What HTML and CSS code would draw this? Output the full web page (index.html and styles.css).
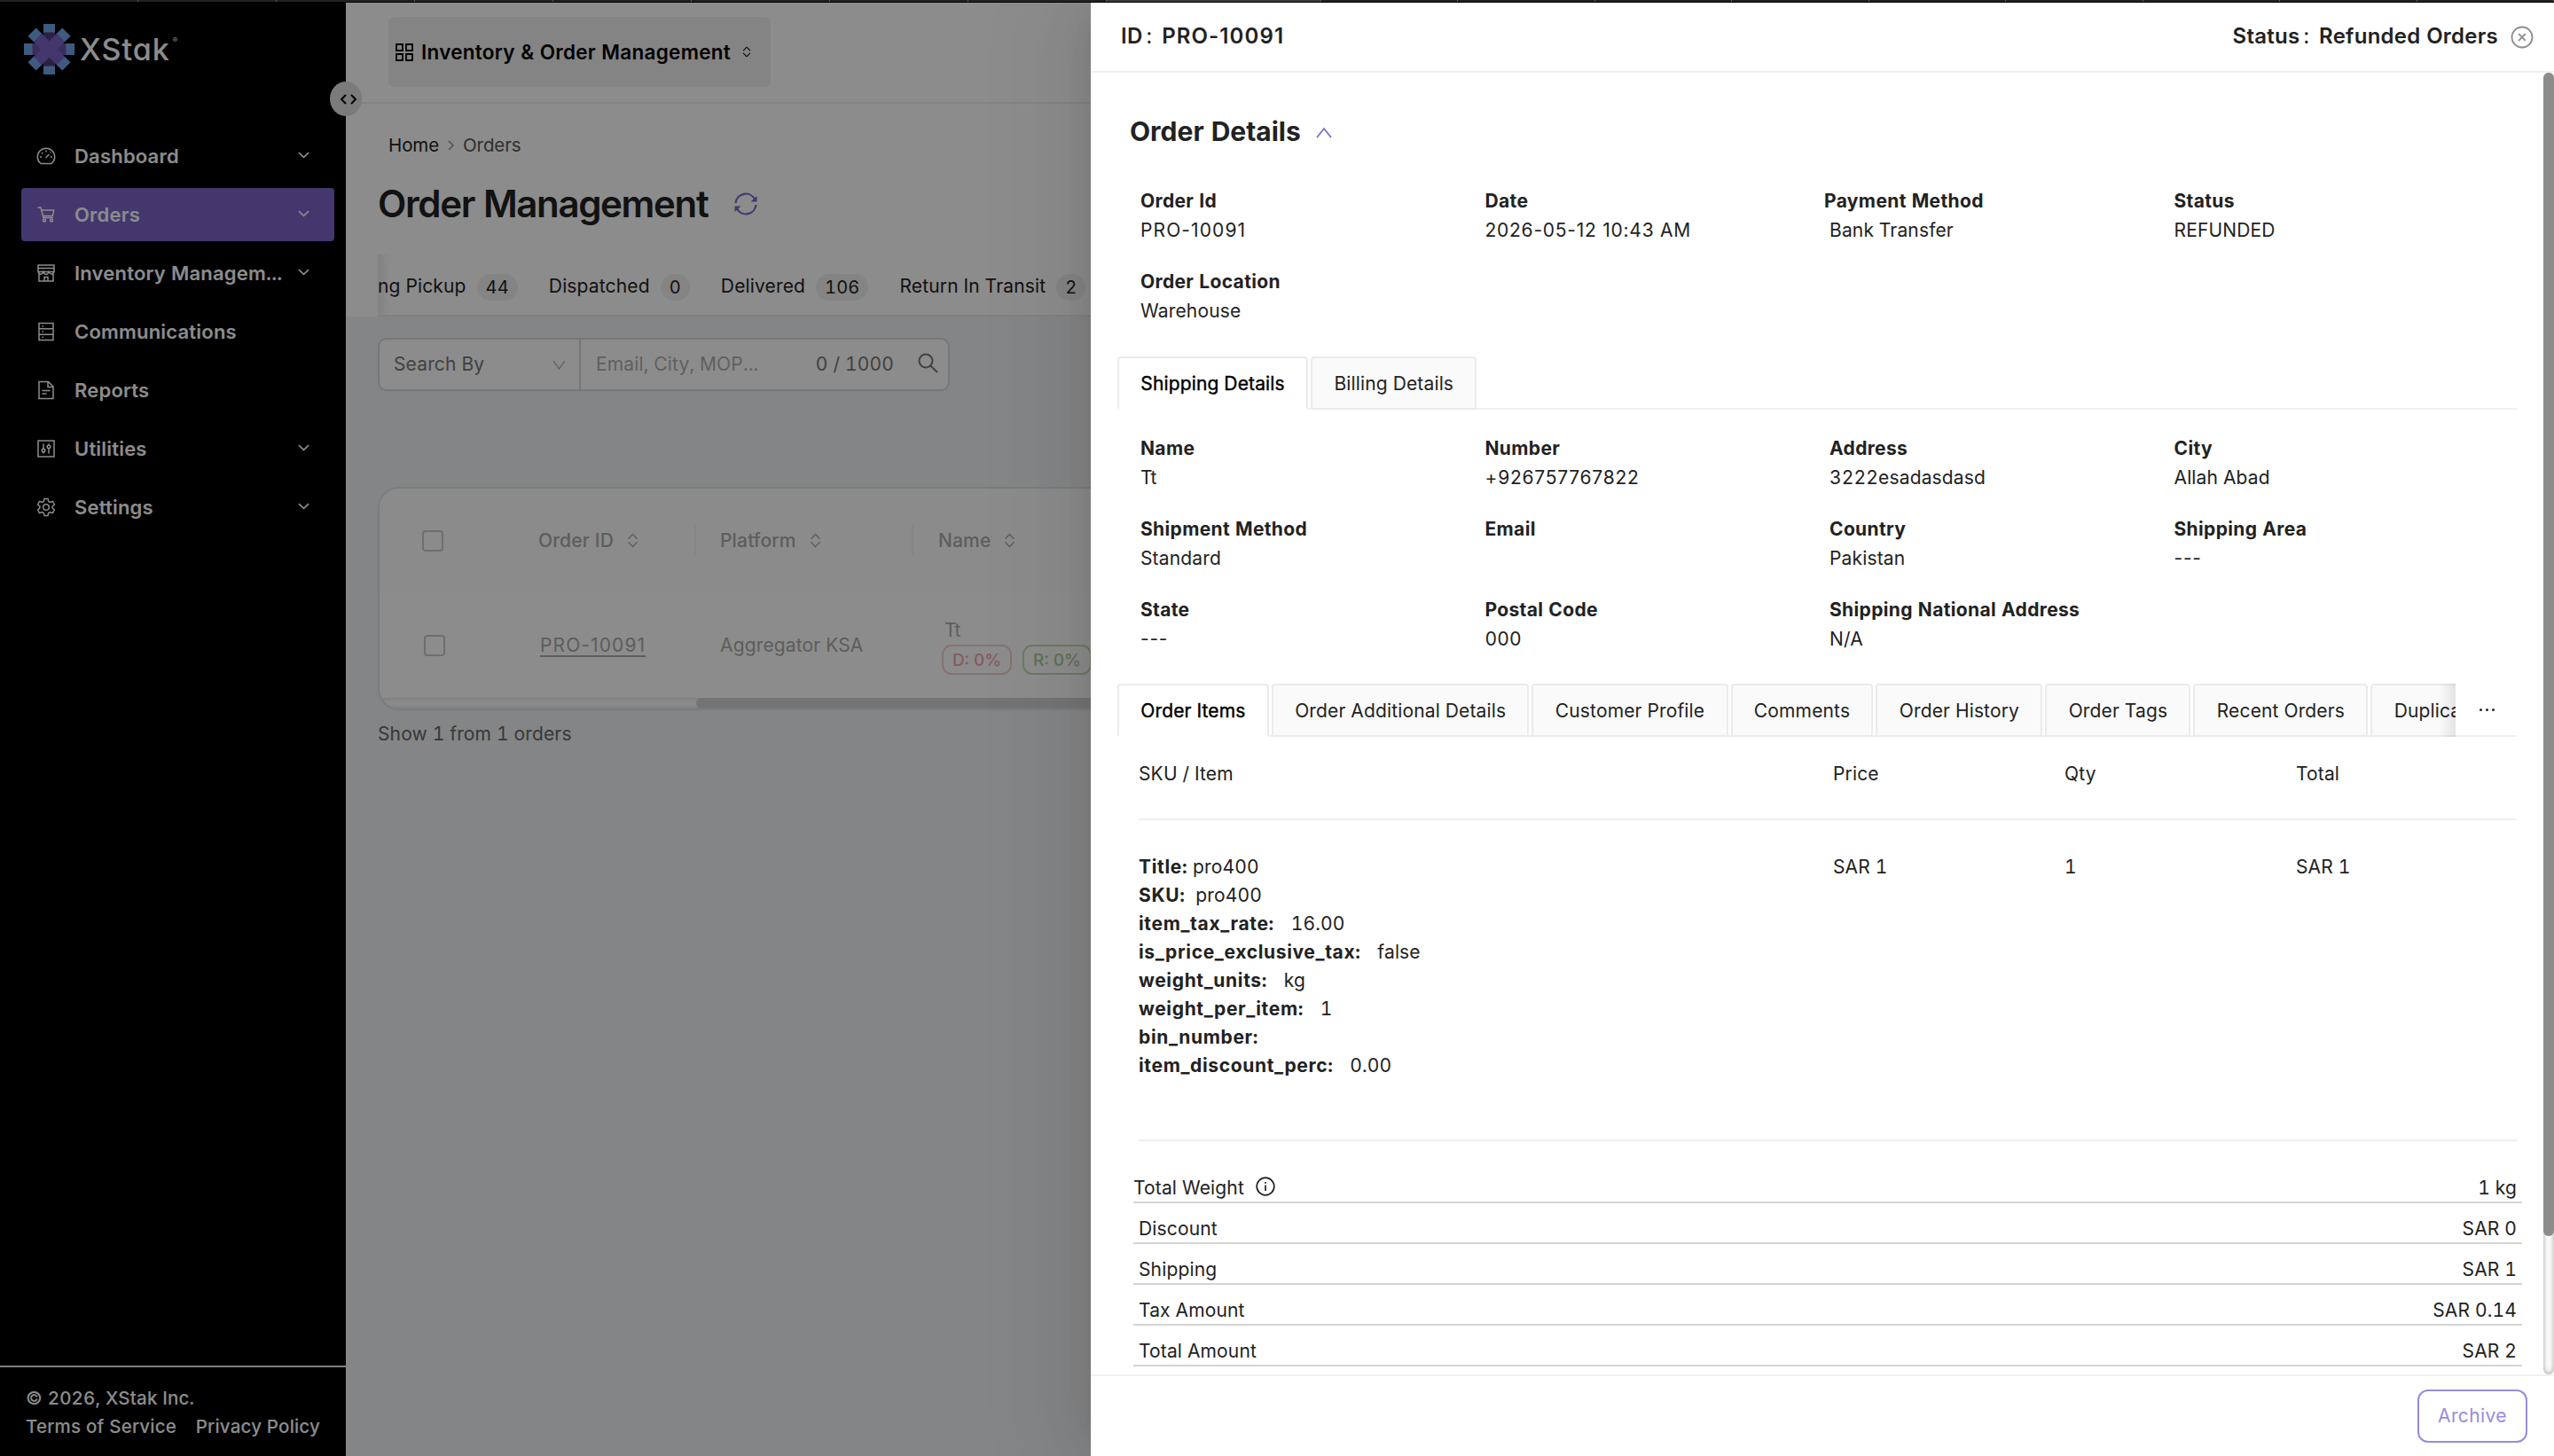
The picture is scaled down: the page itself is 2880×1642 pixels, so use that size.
FILE: index.html
```html
<!DOCTYPE html>
<html lang="en">
<head>
  <meta charset="UTF-8" />
  <meta name="viewport" content="width=device-width, initial-scale=1.0"/>
  <title>XStak - Order Management</title>
  <link rel="stylesheet" href="styles.css">
</head>
<body>
  <!-- Icons -->
  <svg class="sprite" width="0" height="0">
    <symbol id="down" viewBox="0 0 14 8"><path d="M1 1l6 5.500 6-5.500" fill="none" stroke="currentColor" stroke-width="1.800"/></symbol>
    <symbol id="sort" viewBox="0 0 14 18"><path d="M1.500 7L7 1.500 12.500 7M1.500 11L7 16.500 12.500 11" fill="none" stroke="currentColor" stroke-width="1.500"/></symbol>
  </svg>

  <div class="strip">
    <i></i><i></i><i></i><i></i><i></i><i></i><i></i><i></i><i class="current"></i>
    <b></b><b></b><b></b><b></b><b></b><b></b><b></b><b></b><b></b>
  </div>

  <div class="app">
    <!-- Sidebar -->
    <aside class="sidebar">
      <div class="logo">
        <svg width="57" height="57" viewBox="0 0 57 57">
          <path fill="#4d3d79" d="M22 9h13v39H22z"/>
          <path fill="#6a55a9" d="M9 22h11v13H9zM37 22h11v13H37z"/>
          <path fill="#73a4e8" d="M22 0h13v9.500H22zM22 47.500h13V57H22zM0 22h9.500v13H0zM47.500 22H57v13h-9.500z"/>
          <path fill="#7b64c8" d="M22 9h13v39H22z" transform="rotate(45 28.500 28.500)"/>
          <path fill="#7b64c8" d="M22 9h13v39H22z" transform="rotate(-45 28.500 28.500)"/>
          <path fill="#73a4e8" d="M22 1h13v9H22zM22 47h13v9H22z" transform="rotate(45 28.500 28.500)"/>
          <path fill="#73a4e8" d="M22 1h13v9H22zM22 47h13v9H22z" transform="rotate(-45 28.500 28.500)"/>
        </svg>
        <span class="logo-text">XStak</span><sup>®</sup>
      </div>
      <nav class="menu">
        <a class="item">
          <svg viewBox="0 0 22 22"><path d="M5 19.500A9.700 9.700 0 1 1 17 19.500z"/><path d="M10.500 13l4-4M11 4.500v2M4 12h2M16 12h2M6 7l1.300 1.300M15.500 7.300l.8-.8"/></svg>
          <span>Dashboard</span><svg class="arrow"><use href="#down"/></svg>
        </a>
        <a class="item active">
          <svg viewBox="0 0 22 22"><path d="M1.500 3h3.500l3 11.500h11M5.800 6h14l-1.500 6.500H7.500"/><circle cx="9" cy="17.500" r="1.500"/><circle cx="17" cy="17.500" r="1.500"/></svg>
          <span>Orders</span><svg class="arrow"><use href="#down"/></svg>
        </a>
        <a class="item">
          <svg viewBox="0 0 22 22"><path d="M2 2h18v7.500H2zM2 5.500h18M3 9.500V20h16V9.500M9 20v-4.500h4V20M2 9.500c1.500 4 5 3 6 0 1.500 4 4.500 4 6 0 1.500 3 4.500 4 6 0"/></svg>
          <span>Inventory Managem...</span><svg class="arrow"><use href="#down"/></svg>
        </a>
        <a class="item">
          <svg viewBox="0 0 22 22"><path d="M3 1.500h16v19H3zM3 7.800h16M3 14.200h16M6.500 4.700h1.500M6.500 11h1.500M6.500 17.300h1.500"/></svg>
          <span>Communications</span>
        </a>
        <a class="item">
          <svg viewBox="0 0 22 22"><path d="M3 1.500h10.500L19 7v13.500H3zM13 2v5.500h5.500M6.500 11.500h9M6.500 15h5"/></svg>
          <span>Reports</span>
        </a>
        <a class="item">
          <svg viewBox="0 0 22 22"><path d="M2 2h18v18H2zM8 5.500v6M8 15v1.500M14 5.500V7M14 10.500v6"/><circle cx="8" cy="13" r="1.800"/><circle cx="14" cy="8.800" r="1.800"/></svg>
          <span>Utilities</span><svg class="arrow"><use href="#down"/></svg>
        </a>
        <a class="item">
          <svg viewBox="0 0 22 22"><path d="M9 1.500h4l.7 3 1.800 1 2.900-1 2 3.500-2.300 2v2l2.300 2-2 3.500-2.900-1-1.800 1-.7 3H9l-.7-3-1.800-1-2.900 1-2-3.500 2.300-2v-2l-2.300-2 2-3.500 2.900 1 1.800-1z"/><circle cx="11" cy="11" r="3.300"/></svg>
          <span>Settings</span><svg class="arrow"><use href="#down"/></svg>
        </a>
      </nav>
      <div class="legal">
        <div>© 2026, XStak Inc.</div>
        <div class="links"><span>Terms of Service</span><span>Privacy Policy</span></div>
      </div>
      <div class="toggle">
        <svg width="22" height="14" viewBox="0 0 22 14"><path d="M8 2L3 7l5 5M14 2l5 5-5 5" fill="none" stroke="#000" stroke-width="2"/></svg>
      </div>
    </aside>

    <!-- Page -->
    <main class="page">
      <header class="topbar">
        <div class="switcher">
          <svg width="20" height="20" viewBox="0 0 20 20"><path d="M1 1h7v7H1zM12 1h7v7h-7zM1 12h7v7H1zM12 12h7v7h-7z" fill="none" stroke="#000" stroke-width="1.800"/></svg>
          <span>Inventory &amp; Order Management</span>
          <svg class="sort" width="10" height="15"><use href="#sort"/></svg>
        </div>
      </header>
      <section class="head">
        <div class="crumbs">
          <span>Home</span>
          <svg width="7" height="12" viewBox="0 0 7 12"><path d="M1 1l5 5-5 5" fill="none" stroke="#8c8c8c" stroke-width="1.500"/></svg>
          <span class="last">Orders</span>
        </div>
        <div class="title">
          <h1>Order Management</h1>
          <svg width="28" height="28" viewBox="0 0 28 28"><g fill="none" stroke="#7b64c8" stroke-width="2.200"><path d="M2.500 13A11.500 11.500 0 0 1 24 8.500M25.500 15A11.500 11.500 0 0 1 4 19.500"/></g><path fill="#7b64c8" d="M26.500 5v6.500h-7zM1.500 23v-6.500h7z"/></svg>
        </div>
        <div class="filters">
          <div class="filter"><span>ng Pickup</span><em>44</em></div>
          <div class="filter"><span>Dispatched</span><em>0</em></div>
          <div class="filter"><span>Delivered</span><em>106</em></div>
          <div class="filter"><span>Return In Transit</span><em>2</em></div>
        </div>
      </section>
      <div class="search">
        <div class="search-by"><span>Search By</span><svg width="15" height="11" viewBox="0 0 15 11"><path d="M1 1l6.500 9L14 1" fill="none" stroke="#bbb" stroke-width="1.500"/></svg></div>
        <div class="search-box">
          <span class="placeholder">Email, City, MOP...</span>
          <span class="count">0 / 1000</span>
          <svg width="23" height="23" viewBox="0 0 23 23"><path d="M14.500 14.500L22 22M1.500 9a7.500 7.500 0 1 0 15 0 7.500 7.500 0 0 0-15 0z" fill="none" stroke="#777" stroke-width="2"/></svg>
        </div>
      </div>
      <div class="table">
        <div class="tr th">
          <div class="c-check"><i class="box"></i></div>
          <div class="c-id">Order ID<svg class="sort" width="13" height="17"><use href="#sort"/></svg></div>
          <div class="c-platform">Platform<svg class="sort" width="13" height="17"><use href="#sort"/></svg></div>
          <div class="c-name">Name<svg class="sort" width="13" height="17"><use href="#sort"/></svg></div>
        </div>
        <div class="tr">
          <div class="c-check"><i class="box"></i></div>
          <div class="c-id"><u class="id">PRO-10091</u></div>
          <div class="c-platform">Aggregator KSA</div>
          <div class="c-name">
            <div>Tt</div>
            <div class="tags"><span class="tag red">D: 0%</span><span class="tag green">R: 0%</span></div>
          </div>
        </div>
        <div class="scroll-x"><i></i></div>
      </div>
      <div class="showing">Show 1 from 1 orders</div>
    </main>
  </div>

  <div class="mask"></div>

  <!-- Order drawer -->
  <div class="drawer">
    <header class="drawer-head">
      <div class="pair"><span>ID</span><i>:</i><span class="id">PRO-10091</span></div>
      <div class="pair"><span>Status</span><i>:</i><span>Refunded Orders</span>
        <svg width="26" height="26" viewBox="0 0 26 26"><path d="M13 1.500a11.500 11.500 0 1 0 0 23 11.500 11.500 0 0 0 0-23zM9.200 9.200l7.600 7.600M16.800 9.200l-7.600 7.600" fill="none" stroke="#8c8c8c" stroke-width="1.800"/></svg>
      </div>
    </header>

    <div class="drawer-body">
      <h2>Order Details<svg width="18" height="13" viewBox="0 0 18 13"><path d="M1 12L9 2l8 10" fill="none" stroke="#7b64c8" stroke-width="1.700"/></svg></h2>
      <div class="info">
        <div><b>Order Id</b><span class="id">PRO-10091</span></div>
        <div><b>Date</b><span class="num">2026-05-12 10:43 AM</span></div>
        <div><b class="pay">Payment Method</b><span>Bank Transfer</span></div>
        <div><b>Status</b><span>REFUNDED</span></div>
        <div><b>Order Location</b><span>Warehouse</span></div>
      </div>

      <div class="tabs">
        <div class="tab on">Shipping Details</div>
        <div class="tab">Billing Details</div>
      </div>
      <div class="info shipping">
        <div><b>Name</b><span>Tt</span></div>
        <div><b>Number</b><span class="num">+926757767822</span></div>
        <div><b>Address</b><span>3222esadasdasd</span></div>
        <div><b>City</b><span>Allah Abad</span></div>
        <div><b>Shipment Method</b><span>Standard</span></div>
        <div><b>Email</b><span></span></div>
        <div><b>Country</b><span>Pakistan</span></div>
        <div><b>Shipping Area</b><span class="num">---</span></div>
        <div><b>State</b><span class="num">---</span></div>
        <div><b>Postal Code</b><span>000</span></div>
        <div><b>Shipping National Address</b><span>N/A</span></div>
      </div>

      <div class="tabs order-tabs">
        <div class="tab-list">
          <div class="tab on">Order Items</div>
          <div class="tab">Order Additional Details</div>
          <div class="tab">Customer Profile</div>
          <div class="tab">Comments</div>
          <div class="tab">Order History</div>
          <div class="tab">Order Tags</div>
          <div class="tab">Recent Orders</div>
          <div class="tab">Duplicate</div>
        </div>
        <div class="more"><i></i><i></i><i></i></div>
      </div>
      <div class="items">
        <div class="row row-head"><span>SKU / Item</span><span>Price</span><span>Qty</span><span>Total</span></div>
        <div class="row">
          <div class="attrs">
            <div><b>Title:</b> pro400</div>
            <div class="sku"><b>SKU:</b> pro400</div>
            <div class="wide"><b>item_tax_rate:</b> 16.00</div>
            <div class="wide"><b>is_price_exclusive_tax:</b> false</div>
            <div class="wide"><b>weight_units:</b> kg</div>
            <div class="wide"><b>weight_per_item:</b> 1</div>
            <div class="wide"><b>bin_number:</b></div>
            <div class="wide"><b>item_discount_perc:</b> 0.00</div>
          </div>
          <span>SAR 1</span><span>1</span><span>SAR 1</span>
        </div>
      </div>
      <div class="totals">
        <div class="weight"><span>Total Weight</span>
          <svg width="22" height="22" viewBox="0 0 22 22"><circle cx="11" cy="11" r="9.800" fill="none" stroke="#222" stroke-width="1.700"/><path d="M11 9.500V16M11 6v1.800" stroke="#222" stroke-width="1.700"/></svg>
          <span>1 kg</span></div>
        <div><span>Discount</span><span>SAR 0</span></div>
        <div><span>Shipping</span><span>SAR 1</span></div>
        <div><span>Tax Amount</span><span>SAR 0.14</span></div>
        <div><span>Total Amount</span><span>SAR 2</span></div>
      </div>
      <div class="scroll-y"><i></i></div>
    </div>

    <footer class="drawer-foot"><button>Archive</button></footer>
  </div>
</body>
</html>
```
FILE: styles.css
```css
* {
  box-sizing: border-box;
}

body {
  margin: 0;
  width: 2880px;
  height: 1642px;
  overflow: hidden;
  background: #000;
  font-family: Inter, sans-serif;
  font-size: 21px;
  font-variant-numeric: tabular-nums;
  line-height: 32px;
  letter-spacing: 0.15px;
  color: #222;
  display: flex;
  flex-direction: column;
}

i, em {
  font-style: normal;
}

svg {
  display: block;
  flex: none;
}

.sprite {
  position: absolute;
}

/* tab edges above the page */
.strip {
  display: flex;
  height: 3px;
  flex: none;
  border-bottom: 1px solid #000;
  background: #222;
  position: relative;
  z-index: 5;
}

.strip i {
  width: 156px;
  border-right: 1px solid #555;
}

.strip i.current {
  width: 242px;
  background: #3a3a3a;
}

.strip b {
  flex: 1;
  border-right: 1px solid #555;
}

.app {
  display: flex;
  flex: 1;
}

/* Sidebar */
.sidebar {
  position: relative;
  width: 390px;
  background: #000;
  color: #fff;
  display: flex;
  flex-direction: column;
}

.logo {
  display: flex;
  align-items: center;
  height: 57px;
  margin: 24px 0 0 27px;
}

.logo-text {
  margin-left: 6px;
  font-size: 34px;
  font-weight: 500;
  font-feature-settings: "cv11";
  letter-spacing: 1px;
}

.logo sup {
  font-size: 8px;
  align-self: flex-start;
  margin: 2px 0 0 3px;
}

.menu {
  margin: 62px 13px 0 24px;
  display: flex;
  flex-direction: column;
  gap: 6px;
}

.item {
  display: flex;
  align-items: center;
  height: 60px;
  padding: 0 28px 0 17px;
  border-radius: 4px;
  font-size: 22px;
  font-weight: 600;
  letter-spacing: 0.2px;
}

.item svg {
  width: 22px;
  height: 22px;
  fill: none;
  stroke: #fff;
  stroke-width: 1.5;
  margin-right: 21px;
}

.item span {
  flex: 1;
  white-space: nowrap;
}

.item .arrow {
  width: 13px;
  height: 8px;
  margin: -3px 0 0;
}

.active {
  background: #7b64c8;
}

.legal {
  margin-top: auto;
  height: 102px;
  border-top: 2px solid #e8e8e8;
  padding: 19px 29px;
  font-size: 20.5px;
  font-weight: 500;
  letter-spacing: 0.2px;
}

.links {
  display: flex;
  justify-content: space-between;
  white-space: nowrap;
}

.toggle {
  position: absolute;
  left: 372px;
  top: 89px;
  width: 36px;
  height: 39px;
  border-radius: 50%;
  background: #e0e0e0;
  display: flex;
  align-items: center;
  justify-content: center;
}

.toggle svg {
  margin-left: 5px;
}

/* Page */
.page {
  flex: 1;
  background: #f0f2f5;
}

.topbar {
  height: 114px;
  padding: 16px 48px;
  background: #fff;
  border-bottom: 2px solid #eee;
}

.switcher {
  display: flex;
  align-items: center;
  width: 431px;
  height: 79px;
  padding: 0 8px;
  border-radius: 6px;
  background: #f0f0f0;
  color: #000;
  font-size: 22.5px;
  font-weight: 600;
  letter-spacing: 0.27px;
  white-space: nowrap;
}

.switcher span {
  margin: 0 13px 0 9px;
}

.head {
  height: 240px;
  padding: 31px 0 0 36px;
  background: #fff;
}

.crumbs {
  display: flex;
  align-items: center;
  gap: 10px;
  margin-left: 12px;
  font-size: 20.5px;
  letter-spacing: -0.1px;
}

.crumbs .last {
  color: #555;
}

.title {
  display: flex;
  align-items: center;
  gap: 29px;
  margin-top: 26px;
}

h1 {
  margin: 0;
  font-size: 42px;
  line-height: 48px;
  font-weight: 600;
  letter-spacing: -1.35px;
}

.filters {
  display: flex;
  gap: 35px;
  height: 70px;
  margin-top: 33px;
  padding-top: 20px;
  border-bottom: 2px solid #eaeaea;
  background: linear-gradient(90deg, #eee, #fff 14px);
}

.filter {
  display: flex;
  gap: 12px;
  white-space: nowrap;
}

.filter em {
  height: 30px;
  margin-top: 2px;
  padding: 0 10px;
  border-radius: 15px;
  background: #f0f0f0;
  font-size: 20px;
  line-height: 31px;
}

.search {
  display: flex;
  width: 645px;
  height: 60px;
  margin: 24px 0 0 36px;
  border: 2px solid #d9d9d9;
  border-radius: 10px;
  background: #fff;
  color: #777;
}

.search-by {
  display: flex;
  align-items: center;
  justify-content: space-between;
  width: 227px;
  padding: 0 15px 0 16px;
  border-right: 2px solid #d9d9d9;
}

.search-box {
  flex: 1;
  display: flex;
  align-items: center;
  padding: 0 11px 0 17px;
}

.placeholder {
  flex: 1;
  color: #b0b0b0;
}

.count {
  margin-right: 27px;
}

.search-box svg {
  margin-top: -4px;
}

.table {
  height: 252px;
  margin: 108px 0 0 36px;
  border: 2px solid #e2e2e2;
  border-right: 0;
  border-radius: 24px 0 0 24px;
  background: #fff;
  color: #aaa;
  overflow: hidden;
}

.tr {
  display: flex;
  align-items: center;
  height: 119px;
}

.th {
  height: 117px;
  font-weight: 500;
  background: #fdfdfd;
}

.th > div {
  display: flex;
  align-items: center;
  height: 35px;
}

.th .sort {
  margin-left: 15px;
}

.c-check {
  width: 178px;
  padding-left: 50px;
}

.th .c-check {
  padding-left: 48px;
}

.box {
  display: block;
  width: 24px;
  height: 24px;
  border: 2px solid #c8c8c8;
  border-radius: 4px;
}

.c-id {
  width: 179px;
  padding-left: 3px;
}

.th .c-id {
  padding-left: 1px;
  border-right: 2px solid #f4f4f4;
}

.c-platform {
  width: 245px;
  padding-left: 27px;
  white-space: nowrap;
}

.th .c-platform {
  border-right: 2px solid #f4f4f4;
}

.c-name {
  padding-left: 35px;
}

.th .c-name {
  padding-left: 28px;
}

u {
  text-decoration-thickness: 2px;
  text-underline-offset: 4px;
}

.tags {
  display: flex;
  gap: 12px;
  margin-left: -3px;
}

.tag {
  height: 34px;
  padding: 0 10px;
  border: 2px solid;
  border-radius: 11px;
  font-size: 19px;
  font-weight: 500;
  line-height: 31px;
  letter-spacing: 0;
  white-space: nowrap;
}

.red {
  color: #f0a8a6;
  border-color: #f5cfcf;
}

.green {
  color: #a9cf98;
  border-color: #c4dfb0;
}

.scroll-x {
  height: 12px;
  border-radius: 6px;
  box-shadow: inset 0 0 6px #ccc;
}

.scroll-x i {
  display: block;
  height: 12px;
  margin-left: 357px;
  border-radius: 6px;
  background: #d4d4d4;
}

.showing {
  margin: 11px 0 0 36px;
  color: #666;
}

.mask {
  position: absolute;
  inset: 3px 0 0;
  background: rgba(0, 0, 0, 0.45);
}

/* Drawer */
.drawer {
  position: absolute;
  top: 3px;
  right: 0;
  bottom: 0;
  width: 1650px;
  background: #fff;
  display: flex;
  flex-direction: column;
  box-shadow: -12px 0 32px -16px rgba(0, 0, 0, 0.08), -18px 0 56px rgba(0, 0, 0, 0.05), -24px 0 96px 32px rgba(0, 0, 0, 0.03);
}

.drawer-head {
  display: flex;
  justify-content: space-between;
  height: 79px;
  padding: 22px 23px 0 34px;
  border-bottom: 2px solid #f0f0f0;
  font-size: 24px;
  font-weight: 600;
  letter-spacing: 0.25px;
}

.pair {
  display: flex;
}

.pair i {
  margin: 0 11px 0 4px;
  font-weight: 400;
}

.pair svg {
  margin: 4px 0 0 14px;
}

.drawer-body {
  position: relative;
  height: 1468px;
  padding: 50px 42px 0 30px;
  overflow: hidden;
}

h2 {
  display: flex;
  align-items: center;
  margin: 0 0 47px 14px;
  font-size: 30px;
  font-weight: 700;
  letter-spacing: 0;
}

h2 svg {
  margin: 2px 0 0 17px;
}

.info {
  display: grid;
  grid-template-columns: repeat(4, 388.5px);
  row-gap: 25px;
  padding-left: 26px;
}

.info div {
  height: 66px;
}

.info b,
.info span {
  display: block;
  height: 33px;
  white-space: nowrap;
}

b {
  font-weight: 700;
  letter-spacing: 0.35px;
}

.num,
.id {
  font-variant-numeric: normal;
  letter-spacing: 0.75px;
}

.id {
  letter-spacing: 1.1px;
}

.pay {
  margin-left: -6px;
}

.shipping {
  padding-top: 28px;
}

.tabs {
  display: flex;
  gap: 3px;
  height: 60px;
  margin-top: 34px;
  box-shadow: inset 0 -2px #f0f0f0;
}

.order-tabs {
  margin-top: 33px;
}

.tab {
  flex: none;
  padding: 0 24.3px;
  border: 2px solid #ebebeb;
  border-radius: 4px 4px 0 0;
  background: #fafafa;
  line-height: 58px;
}

.on {
  border-bottom-color: #fff;
  background: #fff;
  color: #000;
  -webkit-text-stroke: 0.4px #000;
}

.tab-list {
  position: relative;
  display: flex;
  gap: 3px;
  width: 1509px;
  overflow: hidden;
}

.tab-list::after {
  content: "";
  position: absolute;
  right: 0;
  width: 18px;
  height: 60px;
  background: linear-gradient(90deg, transparent, rgba(0, 0, 0, 0.09));
}

.more {
  display: flex;
  gap: 4px;
  padding: 28px 0 0 24px;
}

.more i {
  width: 3px;
  height: 3px;
  border-radius: 50%;
  background: #222;
}

.items {
  margin-left: 24px;
}

.row {
  display: grid;
  grid-template-columns: 783px 261px 261px 1fr;
  height: 362px;
  padding: 37px 0 0;
  border-bottom: 2px solid #f0f0f0;
}

.row-head {
  height: 94px;
  padding-top: 26px;
}

.attrs b {
  letter-spacing: 0.65px;
}

.sku b {
  margin-right: 6px;
}

.wide b {
  margin-right: 13px;
}

.totals {
  margin: 24px -6px 0 18px;
}

.totals div {
  display: flex;
  justify-content: space-between;
  height: 46px;
  padding: 13px 6px 0;
  border-bottom: 2px solid #d4d4d4;
}

.totals .weight {
  padding-left: 0;
}

.weight svg {
  margin: 3px auto 0 13px;
}

.scroll-y {
  position: absolute;
  top: 0;
  right: 0;
  width: 12px;
  height: 1468px;
  border-radius: 6px;
  box-shadow: inset 0 0 6px #999;
}

.scroll-y i {
  display: block;
  height: 1312px;
  border-radius: 6px;
  background: #8c8c8c;
}

.drawer-foot {
  display: flex;
  justify-content: flex-end;
  padding: 15px 30px;
  border-top: 2px solid #f0f0f0;
  flex: 1;
}

button {
  width: 124px;
  height: 60px;
  padding: 0;
  border: 2px solid #9b8bdb;
  border-radius: 12px;
  background: #fff;
  color: #9b8bdb;
  font: inherit;
  letter-spacing: 0.4px;
}
```
